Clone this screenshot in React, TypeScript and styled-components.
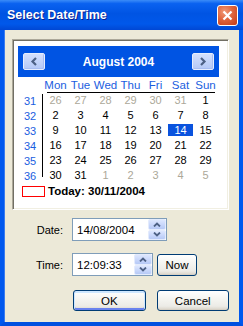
import React from "react";
import styled, { createGlobalStyle } from "styled-components";

const GlobalStyle = createGlobalStyle`
  html, body { margin: 0; padding: 0; background: #ffffff; }
  body { font-family: "Liberation Sans", Arial, sans-serif; font-size: 11px; color: #000; }
  * { box-sizing: border-box; }
`;

const Window = styled.div`
  width: 243px;
  height: 326px;
  display: flex;
  flex-direction: column;
  overflow: hidden;
  background: #0054e3;
`;

const TitleBar = styled.div`
  height: 30px;
  flex: none;
  display: flex;
  align-items: center;
  justify-content: space-between;
  padding: 0 5px 0 7px;
  background: linear-gradient(
    180deg,
    #3b8cf8 0%,
    #0a62f0 12%,
    #0054e3 45%,
    #0058ea 80%,
    #0047d4 100%
  );
`;

const TitleText = styled.span`
  font-family: "Liberation Sans", Arial, sans-serif;
  font-weight: bold;
  font-size: 12.5px;
  color: #ffffff;
  text-shadow: 1px 1px 0 #0a1f8f;
  letter-spacing: 0;
`;

const CloseButton = styled.div`
  width: 21px;
  height: 21px;
  border: 1px solid #ffffff;
  border-radius: 3px;
  background: radial-gradient(circle at 35% 30%, #f09a78 0%, #e0653d 45%, #c63a14 100%);
  display: flex;
  align-items: center;
  justify-content: center;
  margin-top: 1px;
`;

const Body = styled.div`
  flex: 1;
  display: flex;
  flex-direction: column;
  background: #ece9d8;
  border-left: 4px solid #0058ee;
  border-right: 4px solid #0058ee;
  border-bottom: 4px solid #0050e0;
  box-shadow: inset 1px 0 0 #3a7cf0;
  padding: 9px 10px 0 8px;
`;

const Panel = styled.div`
  width: 217px;
  height: 171px;
  flex: none;
  background: #ffffff;
  border: 1px solid;
  border-color: #aca899 #ffffff #ffffff #aca899;
  box-shadow: inset 1px 1px 0 #716f64, inset -1px -1px 0 #f1efe2;
  padding: 6px 0 0 5px;
`;

const Calendar = styled.div`
  width: 201px;
  display: flex;
  flex-direction: column;
`;

const Header = styled.div`
  height: 31px;
  background: #0054e3;
  display: flex;
  align-items: center;
  justify-content: space-between;
  padding: 0 5px;
`;

const NavButton = styled.div`
  width: 22px;
  height: 17px;
  border: 1px solid #e6edfd;
  border-radius: 2px;
  background: linear-gradient(180deg, #d4e0fd 0%, #c3d4fa 50%, #b4c8f6 100%);
  box-shadow: inset -1px -1px 0 #a7bdf2;
  display: flex;
  align-items: center;
  justify-content: center;
`;

const MonthTitle = styled.span`
  color: #ffffff;
  font-weight: bold;
  font-size: 12px;
`;

const DayNames = styled.div`
  display: grid;
  grid-template-columns: repeat(8, 25px);
  height: 15px;
  align-items: center;
  color: #1a5ee0;
  text-align: center;
  font-size: 11.5px;
`;

const Divider = styled.div`
  height: 1px;
  width: 168px;
  margin-left: 29px;
  background: #000000;
`;

const Weeks = styled.div`
  display: flex;
  height: 90px;
`;

const WeekNums = styled.div`
  width: 24px;
  display: grid;
  grid-auto-rows: 15px;
  align-items: center;
  text-align: center;
  color: #1a5ee0;
`;

const VLine = styled.div`
  width: 1px;
  background: #000000;
  margin: 1px 0 6px;
`;

const DaysGrid = styled.div`
  display: grid;
  grid-template-columns: repeat(7, 25px);
  grid-auto-rows: 15px;
`;

const DayCell = styled.div<{ $muted?: boolean; $selected?: boolean }>`
  height: 15px;
  padding: 1px 0 2px;
  line-height: 12px;
  text-align: center;
  background-clip: content-box;
  background-color: ${(p) => (p.$selected ? "#0a53de" : "transparent")};
  color: ${(p) => (p.$selected ? "#ffffff" : p.$muted ? "#aca899" : "#000000")};
`;

const TodayRow = styled.div`
  height: 16px;
  display: flex;
  align-items: center;
  padding-left: 4px;
`;

const TodayBox = styled.div`
  width: 23px;
  height: 11px;
  border: 1px solid #ff0000;
  margin-right: 3px;
`;

const TodayText = styled.span`
  font-weight: bold;
  font-size: 11.5px;
`;

const FormRow = styled.div<{ $gap: number }>`
  display: flex;
  align-items: center;
  margin-top: ${(p) => p.$gap}px;
`;

const FieldLabel = styled.span`
  width: 51px;
  margin-right: 9px;
  text-align: right;
`;

const SpinInput = styled.div<{ $width: number }>`
  width: ${(p) => p.$width}px;
  height: 23px;
  border: 1px solid #7f9db9;
  background: #ffffff;
  display: flex;
  align-items: center;
  justify-content: space-between;
  padding-left: 4px;
  font-size: 11.5px;
`;

const Spinner = styled.div`
  width: 18px;
  height: 21px;
  display: flex;
  flex-direction: column;
`;

const SpinButton = styled.div`
  flex: 1;
  border: 1px solid #e3ebfd;
  border-radius: 2px;
  background: linear-gradient(180deg, #dde7fe 0%, #c6d5fa 60%, #b6c9f6 100%);
  display: flex;
  align-items: center;
  justify-content: center;
`;

const XPButton = styled.div<{ $width: number; $height: number; $default?: boolean }>`
  width: ${(p) => p.$width}px;
  height: ${(p) => p.$height}px;
  border: 1px solid #003c74;
  border-radius: 3px;
  background: linear-gradient(180deg, #ffffff 0%, #f4f4f0 45%, #ecebe6 80%, #d8d2c6 100%);
  box-shadow: ${(p) =>
    p.$default
      ? "inset 0 1px 0 1px #cee7ff, inset 0 -1px 0 1px #6982ee"
      : "inset 0 -1px 0 #d6d0c5"};
  display: flex;
  align-items: center;
  justify-content: center;
  font-size: 11.5px;
  margin-left: ${(p) => (p.$default ? 0 : 0)}px;
`;

const ButtonRow = styled.div`
  display: flex;
  gap: 11px;
  margin-top: 14px;
  padding-left: 61px;
`;

const NowButton = styled(XPButton)`
  margin-left: 4px;
`;

const Chevron = ({ dir }: { dir: "left" | "right" }) => (
  <svg width="8" height="9" viewBox="0 0 8 9">
    <polyline
      points={dir === "left" ? "6,1 2.5,4.5 6,8" : "2,1 5.5,4.5 2,8"}
      fill="none"
      stroke="#4d6185"
      strokeWidth="2.2"
    />
  </svg>
);

const SpinArrow = ({ up }: { up?: boolean }) => (
  <svg width="8" height="5" viewBox="0 0 8 5">
    <polyline
      points={up ? "1,4.5 4,1.5 7,4.5" : "1,0.5 4,3.5 7,0.5"}
      fill="none"
      stroke="#4d6185"
      strokeWidth="1.8"
    />
  </svg>
);

const weeks: { n: number; days: { d: number; muted?: boolean }[] }[] = [
  { n: 31, days: [26, 27, 28, 29, 30, 31].map((d) => ({ d, muted: true })).concat([{ d: 1 }]) },
  { n: 32, days: [2, 3, 4, 5, 6, 7, 8].map((d) => ({ d })) },
  { n: 33, days: [9, 10, 11, 12, 13, 14, 15].map((d) => ({ d })) },
  { n: 34, days: [16, 17, 18, 19, 20, 21, 22].map((d) => ({ d })) },
  { n: 35, days: [23, 24, 25, 26, 27, 28, 29].map((d) => ({ d })) },
  {
    n: 36,
    days: [{ d: 30 }, { d: 31 }].concat([1, 2, 3, 4, 5].map((d) => ({ d, muted: true }))),
  },
];

const dayNames = ["Mon", "Tue", "Wed", "Thu", "Fri", "Sat", "Sun"];

export default function App() {
  return (
    <>
      <GlobalStyle />
      <Window>
        <TitleBar>
          <TitleText>Select Date/Time</TitleText>
          <CloseButton>
            <svg width="11" height="11" viewBox="0 0 11 11">
              <path d="M1.5 1.5 L9.5 9.5 M9.5 1.5 L1.5 9.5" stroke="#ffffff" strokeWidth="2.2" />
            </svg>
          </CloseButton>
        </TitleBar>
        <Body>
          <Panel>
            <Calendar>
              <Header>
                <NavButton>
                  <Chevron dir="left" />
                </NavButton>
                <MonthTitle>August 2004</MonthTitle>
                <NavButton>
                  <Chevron dir="right" />
                </NavButton>
              </Header>
              <DayNames>
                <span />
                {dayNames.map((n) => (
                  <span key={n}>{n}</span>
                ))}
              </DayNames>
              <Divider />
              <Weeks>
                <WeekNums>
                  {weeks.map((w) => (
                    <span key={w.n}>{w.n}</span>
                  ))}
                </WeekNums>
                <VLine />
                <DaysGrid>
                  {weeks.map((w) =>
                    w.days.map((c, i) => (
                      <DayCell
                        key={`${w.n}-${i}`}
                        $muted={c.muted}
                        $selected={w.n === 33 && c.d === 14}
                      >
                        {c.d}
                      </DayCell>
                    ))
                  )}
                </DaysGrid>
              </Weeks>
              <TodayRow>
                <TodayBox />
                <TodayText>Today: 30/11/2004</TodayText>
              </TodayRow>
            </Calendar>
          </Panel>
          <FormRow $gap={8}>
            <FieldLabel>Date:</FieldLabel>
            <SpinInput $width={95}>
              <span>14/08/2004</span>
              <Spinner>
                <SpinButton>
                  <SpinArrow up />
                </SpinButton>
                <SpinButton>
                  <SpinArrow />
                </SpinButton>
              </Spinner>
            </SpinInput>
          </FormRow>
          <FormRow $gap={12}>
            <FieldLabel>Time:</FieldLabel>
            <SpinInput $width={81}>
              <span>12:09:33</span>
              <Spinner>
                <SpinButton>
                  <SpinArrow up />
                </SpinButton>
                <SpinButton>
                  <SpinArrow />
                </SpinButton>
              </Spinner>
            </SpinInput>
            <NowButton $width={40} $height={22}>
              Now
            </NowButton>
          </FormRow>
          <ButtonRow>
            <XPButton $width={73} $height={21} $default>
              OK
            </XPButton>
            <XPButton $width={73} $height={21}>
              Cancel
            </XPButton>
          </ButtonRow>
        </Body>
      </Window>
    </>
  );
}
